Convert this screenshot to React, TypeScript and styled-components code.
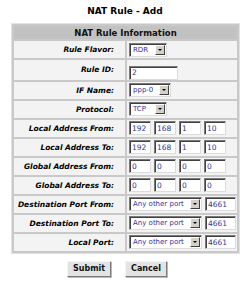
import styled, { createGlobalStyle } from 'styled-components';

const GlobalStyle = createGlobalStyle`
  body {
    margin: 0;
    background: #ffffff;
    font-family: "DejaVu Sans", Verdana, sans-serif;
  }
`;

const Page = styled.div`
  width: 250px;
  height: 293px;
  display: flex;
  flex-direction: column;
  align-items: center;
`;

const Title = styled.h1`
  font-size: 9px;
  font-weight: bold;
  margin: 6px 0 0 0;
  height: 17px;
  color: #000;
`;

const Table = styled.table`
  width: 229px;
  margin-left: 1px;
  border-collapse: separate;
  border-spacing: 2px;
  background: #c9c9c9;
  border: 1px solid #e2e2e2;
  table-layout: fixed;
`;

const HeaderCell = styled.th`
  background: #c2c2c2;
  height: 13px;
  padding: 0;
  font-size: 8.5px;
  font-weight: bold;
  color: #111;
  text-align: center;
`;

const LabelCell = styled.td`
  background: #f3f3f3;
  height: 17px;
  padding: 0 11px 0 0;
  text-align: right;
  font-size: 7.5px;
  font-weight: bold;
  font-style: italic;
  color: #000;
  white-space: nowrap;
`;

const ValueCell = styled.td`
  background: #f3f3f3;
  height: 17px;
  padding: 0 0 0 2px;
`;

const Fields = styled.div`
  display: flex;
  align-items: center;
  gap: 3px;
`;

const TextBox = styled.input<{ $w: number }>`
  box-sizing: border-box;
  width: ${(p) => p.$w}px;
  height: 14px;
  padding: 0 2px;
  margin: 0;
  font-family: "DejaVu Sans", Verdana, sans-serif;
  font-size: 7.5px;
  color: #333399;
  background: #fff;
  border: 1px solid;
  border-color: #7a7a7a #dcdcdc #dcdcdc #7a7a7a;
  box-shadow: inset 1px 1px 0 #404040;
  outline: none;
`;

const Dropdown = styled.div<{ $w: number }>`
  box-sizing: border-box;
  width: ${(p) => p.$w}px;
  height: 14px;
  display: flex;
  align-items: center;
  justify-content: space-between;
  padding: 0 1px 0 3px;
  background: #fff;
  border: 1px solid;
  border-color: #7a7a7a #dcdcdc #dcdcdc #7a7a7a;
  box-shadow: inset 1px 1px 0 #404040;
  font-size: 7px;
  color: #333399;
  white-space: nowrap;
  overflow: hidden;
`;

const ArrowButton = styled.span`
  box-sizing: border-box;
  flex: none;
  width: 10px;
  height: 10px;
  margin-left: 2px;
  background: #d4d0c8;
  border: 1px solid;
  border-color: #ffffff #404040 #404040 #ffffff;
  display: flex;
  align-items: center;
  justify-content: center;

  &::after {
    content: '';
    border-left: 2px solid transparent;
    border-right: 2px solid transparent;
    border-top: 2px solid #000;
  }
`;

const ButtonRow = styled.div`
  display: flex;
  gap: 14px;
  margin-top: 7px;
  padding-right: 16px;
`;

const Button = styled.button<{ $w: number }>`
  box-sizing: border-box;
  width: ${(p) => p.$w}px;
  height: 16px;
  padding: 0;
  font-family: "DejaVu Sans", Verdana, sans-serif;
  font-size: 8px;
  font-weight: bold;
  color: #111;
  background: #e3e3e3;
  border: 1px solid;
  border-color: #f4f4f4 #7a7a7a #7a7a7a #f4f4f4;
  box-shadow: 1px 1px 0 #b8b8b8;
`;

const Select = ({ value, width }: { value: string; width: number }) => (
  <Dropdown $w={width}>
    <span>{value}</span>
    <ArrowButton />
  </Dropdown>
);

const Ip = ({ parts }: { parts: string[] }) => (
  <Fields>
    {parts.map((p, i) => (
      <TextBox key={i} $w={22} defaultValue={p} />
    ))}
  </Fields>
);

const Port = () => (
  <Fields>
    <Select value="Any other port" width={73} />
    <TextBox $w={31} defaultValue="4661" />
  </Fields>
);

export default function App() {
  return (
    <>
      <GlobalStyle />
      <Page>
        <Title>NAT Rule - Add</Title>
        <Table>
          <colgroup>
            <col style={{ width: 111 }} />
            <col />
          </colgroup>
          <thead>
            <tr>
              <HeaderCell colSpan={2}>NAT Rule Information</HeaderCell>
            </tr>
          </thead>
          <tbody>
            <tr>
              <LabelCell>Rule Flavor:</LabelCell>
              <ValueCell><Select value="RDR" width={38} /></ValueCell>
            </tr>
            <tr>
              <LabelCell>Rule ID:</LabelCell>
              <ValueCell><TextBox $w={49} defaultValue="2" /></ValueCell>
            </tr>
            <tr>
              <LabelCell>IF Name:</LabelCell>
              <ValueCell><Select value="ppp-0" width={42} /></ValueCell>
            </tr>
            <tr>
              <LabelCell>Protocol:</LabelCell>
              <ValueCell><Select value="TCP" width={38} /></ValueCell>
            </tr>
            <tr>
              <LabelCell>Local Address From:</LabelCell>
              <ValueCell><Ip parts={['192', '168', '1', '10']} /></ValueCell>
            </tr>
            <tr>
              <LabelCell>Local Address To:</LabelCell>
              <ValueCell><Ip parts={['192', '168', '1', '10']} /></ValueCell>
            </tr>
            <tr>
              <LabelCell>Global Address From:</LabelCell>
              <ValueCell><Ip parts={['0', '0', '0', '0']} /></ValueCell>
            </tr>
            <tr>
              <LabelCell>Global Address To:</LabelCell>
              <ValueCell><Ip parts={['0', '0', '0', '0']} /></ValueCell>
            </tr>
            <tr>
              <LabelCell>Destination Port From:</LabelCell>
              <ValueCell><Port /></ValueCell>
            </tr>
            <tr>
              <LabelCell>Destination Port To:</LabelCell>
              <ValueCell><Port /></ValueCell>
            </tr>
            <tr>
              <LabelCell>Local Port:</LabelCell>
              <ValueCell><Port /></ValueCell>
            </tr>
          </tbody>
        </Table>
        <ButtonRow>
          <Button $w={44}>Submit</Button>
          <Button $w={42}>Cancel</Button>
        </ButtonRow>
      </Page>
    </>
  );
}
